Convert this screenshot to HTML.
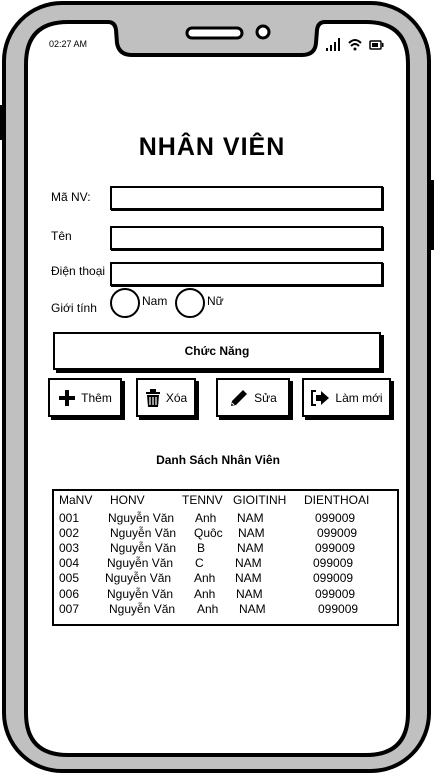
<!DOCTYPE html>
<html><head><meta charset="utf-8"><style>
body{margin:0;width:434px;height:775px;position:relative;background:#fff;font-family:"Liberation Sans",sans-serif;color:#000;overflow:hidden}
.t{position:absolute;white-space:nowrap;font-size:12px}
.inp{position:absolute;border:2px solid #000;background:#fff;box-shadow:1px 1px 0 #000}
.btn{position:absolute;border:2px solid #000;background:#fff;box-shadow:3px 3px 0 #000;font-size:12px;display:flex;align-items:center;justify-content:center;gap:5px}
.row{position:absolute;font-size:12px;white-space:nowrap}
</style></head><body>
<svg width="434" height="775" style="position:absolute;left:0;top:0">
<rect x="0" y="105" width="5" height="35" fill="#000"/>
<rect x="429" y="180" width="5" height="70" fill="#000"/>
<rect x="4" y="3" width="425" height="768" rx="58" fill="#c0c0c0" stroke="#000" stroke-width="4"/>
<path d="M68 22 H108 Q115 22 116 30 L117 43 Q119 55 132 55 H302 Q315 55 316 43 L317 30 Q318 22 325 22 H366 Q408 22 408 64 V713 Q408 755 366 755 H68 Q26 755 26 713 V64 Q26 22 68 22 Z" fill="#fff" stroke="#000" stroke-width="4"/>
<rect x="187" y="28" width="55" height="10" rx="5" fill="#fff" stroke="#000" stroke-width="3"/>
<ellipse cx="263" cy="32" rx="6" ry="6" fill="#fff" stroke="#000" stroke-width="3"/>
<g fill="#000"><rect x="326" y="48" width="2" height="3"/><rect x="330" y="45" width="2" height="6"/><rect x="334" y="42" width="2" height="9"/><rect x="338" y="38" width="2" height="13"/></g>
<path d="M349 43 Q355 37 361 43 M351 46 Q355 42 359 46" stroke="#000" stroke-width="2" fill="none"/><circle cx="355" cy="49" r="1.5"/>
<rect x="370" y="41" width="11" height="8" rx="1" fill="none" stroke="#000" stroke-width="1.5"/><rect x="372" y="43" width="6" height="4"/><rect x="382" y="43" width="1.5" height="4"/>
<circle cx="125" cy="303" r="14" fill="#fff" stroke="#000" stroke-width="2"/>
<circle cx="190" cy="303" r="14" fill="#fff" stroke="#000" stroke-width="2"/>
</svg>
<div class="t" style="left:49px;top:39px;font-size:9px">02:27 AM</div>
<div class="t" style="left:0;width:424px;text-align:center;top:133px;font-size:25px;font-weight:bold;letter-spacing:1px">NHÂN VIÊN</div>
<div class="t" style="left:51px;top:190px">Mã NV:</div>
<div class="inp" style="left:110px;top:186px;width:269px;height:20px"></div>
<div class="t" style="left:51px;top:229px">Tên</div>
<div class="inp" style="left:110px;top:226px;width:269px;height:20px"></div>
<div class="t" style="left:51px;top:264px">Điện thoại</div>
<div class="inp" style="left:110px;top:262px;width:269px;height:20px"></div>
<div class="t" style="left:51px;top:301px">Giới tính</div>
<div class="t" style="left:142px;top:294px">Nam</div>
<div class="t" style="left:207px;top:294px">Nữ</div>
<div class="btn" style="left:53px;top:332px;width:324px;height:34px;font-weight:bold">Chức Năng</div>
<div class="btn" style="left:48px;top:378px;width:70px;height:35px"><svg width="18" height="18"><path d="M7 1h4v6h6v4h-6v6h-4v-6h-6v-4h6z"/></svg>Thêm</div>
<div class="btn" style="left:136px;top:378px;width:56px;height:35px"><svg width="16" height="20"><path d="M1 4h14v2H1zM5 1h6v3H5zM2 7h12l-1 12H3z"/><path d="M5 9v8M8 9v8M11 9v8" stroke="#fff" stroke-width="1.2"/></svg>Xóa</div>
<div class="btn" style="left:216px;top:378px;width:70px;height:35px"><svg width="20" height="20"><path d="M2 18l1-5L14 2l4 4L7 17z"/><path d="M3 15l2 2" stroke="#fff"/></svg>Sửa</div>
<div class="btn" style="left:302px;top:378px;width:85px;height:35px"><svg width="20" height="18"><path d="M6 2H2v14h4" stroke="#000" stroke-width="2" fill="none"/><path d="M6 6h5V2l8 7-8 7v-4H6z"/></svg>Làm mới</div>
<div class="t" style="left:0;width:436px;text-align:center;top:453px;font-weight:bold">Danh Sách Nhân Viên</div>
<div class="inp" style="left:52px;top:489px;width:343px;height:133px;box-shadow:none"></div>
<div class="row" style="left:59px;top:493px">MaNV</div><div class="row" style="left:110px;top:493px">HONV</div><div class="row" style="left:182px;top:493px">TENNV</div><div class="row" style="left:233px;top:493px">GIOITINH</div><div class="row" style="left:304px;top:493px">DIENTHOAI</div>
<div class="row" style="left:59px;top:511px">001</div><div class="row" style="left:108px;top:511px">Nguyễn Văn</div><div class="row" style="left:195px;top:511px">Anh</div><div class="row" style="left:237px;top:511px">NAM</div><div class="row" style="left:315px;top:511px">099009</div>
<div class="row" style="left:59px;top:526px">002</div><div class="row" style="left:110px;top:526px">Nguyễn Văn</div><div class="row" style="left:194px;top:526px">Quôc</div><div class="row" style="left:238px;top:526px">NAM</div><div class="row" style="left:317px;top:526px">099009</div>
<div class="row" style="left:59px;top:541px">003</div><div class="row" style="left:110px;top:541px">Nguyễn Văn</div><div class="row" style="left:197px;top:541px">B</div><div class="row" style="left:237px;top:541px">NAM</div><div class="row" style="left:315px;top:541px">099009</div>
<div class="row" style="left:59px;top:556px">004</div><div class="row" style="left:107px;top:556px">Nguyễn Văn</div><div class="row" style="left:195px;top:556px">C</div><div class="row" style="left:235px;top:556px">NAM</div><div class="row" style="left:313px;top:556px">099009</div>
<div class="row" style="left:59px;top:571px">005</div><div class="row" style="left:105px;top:571px">Nguyễn Văn</div><div class="row" style="left:194px;top:571px">Anh</div><div class="row" style="left:235px;top:571px">NAM</div><div class="row" style="left:313px;top:571px">099009</div>
<div class="row" style="left:59px;top:587px">006</div><div class="row" style="left:107px;top:587px">Nguyễn Văn</div><div class="row" style="left:194px;top:587px">Anh</div><div class="row" style="left:236px;top:587px">NAM</div><div class="row" style="left:315px;top:587px">099009</div>
<div class="row" style="left:59px;top:602px">007</div><div class="row" style="left:109px;top:602px">Nguyễn Văn</div><div class="row" style="left:197px;top:602px">Anh</div><div class="row" style="left:239px;top:602px">NAM</div><div class="row" style="left:318px;top:602px">099009</div>
</body></html>
